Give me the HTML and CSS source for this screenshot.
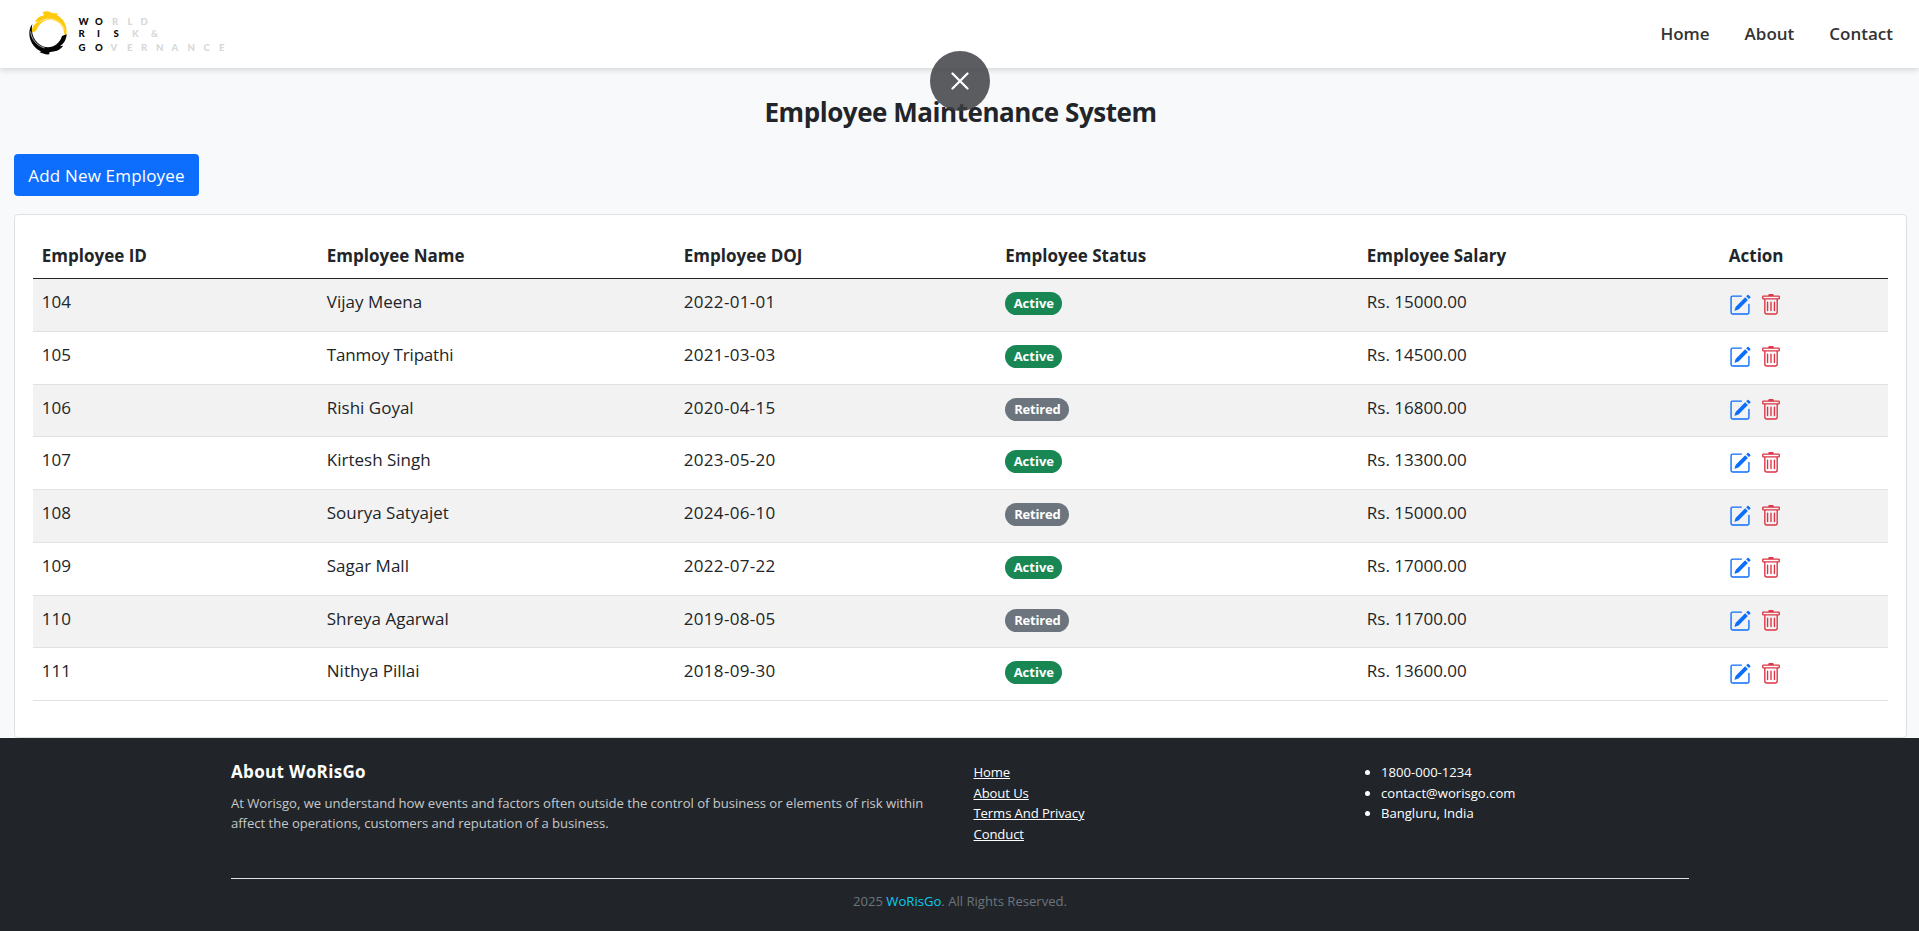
FILE: index.html
```html
<!DOCTYPE html>
<html lang="en">
<head>
<meta charset="utf-8">
<title>Employee Maintenance System</title>
<link rel="stylesheet" href="styles.css">
</head>
<body>
<svg width="0" height="0" class="sprite" aria-hidden="true">
  <symbol id="pencil" viewBox="0 0 16 16">
    <path d="M15.502 1.94a.5.5 0 0 1 0 .706L14.459 3.69l-2-2L13.502.646a.5.5 0 0 1 .707 0l1.293 1.293zm-1.75 2.456-2-2L4.939 9.21a.5.5 0 0 0-.121.196l-.805 2.414a.25.25 0 0 0 .316.316l2.414-.805a.5.5 0 0 0 .196-.12l6.813-6.814z"/>
    <path fill-rule="evenodd" d="M1 13.5A1.5 1.5 0 0 0 2.5 15h11a1.5 1.5 0 0 0 1.5-1.5v-6a.5.5 0 0 0-1 0v6a.5.5 0 0 1-.5.5h-11a.5.5 0 0 1-.5-.5v-11a.5.5 0 0 1 .5-.5H9a.5.5 0 0 0 0-1H2.500A1.5 1.5 0 0 0 1 2.500z"/>
  </symbol>
  <symbol id="trash" viewBox="0 0 16 16">
    <path d="M5.500 5.500A.5.5 0 0 1 6 6v6a.5.5 0 0 1-1 0V6a.5.5 0 0 1 .5-.5m2.500 0a.5.5 0 0 1 .5.5v6a.5.5 0 0 1-1 0V6a.5.5 0 0 1 .5-.5m3 .5a.5.5 0 0 0-1 0v6a.5.5 0 0 0 1 0z"/>
    <path d="M14.500 3a1 1 0 0 1-1 1H13v9a2 2 0 0 1-2 2H5a2 2 0 0 1-2-2V4h-.5a1 1 0 0 1-1-1V2a1 1 0 0 1 1-1H6a1 1 0 0 1 1-1h2a1 1 0 0 1 1 1h3.500a1 1 0 0 1 1 1zM4.118 4 4 4.059V13a1 1 0 0 0 1 1h6a1 1 0 0 0 1-1V4.059L11.882 4zM2.500 3h11V2h-11z"/>
  </symbol>
</svg>

<header class="navbar">
  <svg class="logo" width="210" height="48" viewBox="24 9 210 48">
    <g transform="translate(24 6) scale(.3333)">
      <path fill="#fecb0c" d="M22 80C23 64 32 53 44 46L32 48C39 36 48 30 60 28L56 18C68 14 76 17 82 20L104 23L98 27C122 39 131 63 127 86C126 94 124 99 122 103L122 92C122 66 108 46 84 42C64 38 46 50 36 75Z"/>
      <path fill="none" stroke="#fff" stroke-width="2" d="M46 48C70 31 108 38 121 70"/>
      <path fill="#050505" d="M128 85C127 103 118 114 108 121L118 119C111 128 102 134 92 136L76 139L76 145C66 147 52 140 46 138L52 137C28 126 16 104 16 82C16 70 19 61 25 54C19 82 31 109 56 121C82 130 106 116 114 90Z"/>
      <path fill="none" stroke="#fff" stroke-width="2" d="M20 76C22 100 38 119 62 126"/>
    </g>
    <g class="logo-text">
      <text y="25" x="78.500 95">WO</text><text class="pale" y="25" x="112 127.500 140.500">RLD</text>
      <text y="37.300" x="78.500 97 113.500">RIS</text><text class="pale" y="37.300" x="132 151">K&amp;</text>
      <text y="51" x="78.500 95">GO</text><text class="pale" y="51" x="110.500 127 141 156 171.500 187.500 203.500 219">VERNANCE</text>
    </g>
  </svg>
  <nav class="nav-links"><a>Home</a><a>About</a><a>Contact</a></nav>
</header>

<div class="close-bubble"><svg width="18" height="18" viewBox="0 0 18 18"><path d="M1.500 1.500l15 15M16.500 1.500l-15 15" stroke="#fff" stroke-width="2.200" stroke-linecap="round"/></svg></div>

<main class="page">
  <h1 class="title">Employee Maintenance System</h1>
  <button class="add-btn">Add New Employee</button>
  <section class="card">
    <table class="employees">
      <colgroup><col class="c-id"><col class="c-name"><col class="c-doj"><col class="c-status"><col class="c-salary"><col></colgroup>
      <thead><tr><th>Employee ID</th><th>Employee Name</th><th>Employee DOJ</th><th>Employee Status</th><th>Employee Salary</th><th>Action</th></tr></thead>
      <tbody>
        <tr><td>104</td><td>Vijay Meena</td><td class="num">2022-01-01</td><td><span class="badge active">Active</span></td><td>Rs. 15000.00</td><td><div class="actions"><svg class="edit"><use href="#pencil"/></svg><svg class="del"><use href="#trash"/></svg></div></td></tr>
        <tr><td>105</td><td class="tight">Tanmoy Tripathi</td><td class="num">2021-03-03</td><td><span class="badge active">Active</span></td><td>Rs. 14500.00</td><td><div class="actions"><svg class="edit"><use href="#pencil"/></svg><svg class="del"><use href="#trash"/></svg></div></td></tr>
        <tr><td>106</td><td>Rishi Goyal</td><td class="num">2020-04-15</td><td><span class="badge retired">Retired</span></td><td>Rs. 16800.00</td><td><div class="actions"><svg class="edit"><use href="#pencil"/></svg><svg class="del"><use href="#trash"/></svg></div></td></tr>
        <tr><td>107</td><td>Kirtesh Singh</td><td class="num">2023-05-20</td><td><span class="badge active">Active</span></td><td>Rs. 13300.00</td><td><div class="actions"><svg class="edit"><use href="#pencil"/></svg><svg class="del"><use href="#trash"/></svg></div></td></tr>
        <tr><td>108</td><td>Sourya Satyajet</td><td class="num">2024-06-10</td><td><span class="badge retired">Retired</span></td><td>Rs. 15000.00</td><td><div class="actions"><svg class="edit"><use href="#pencil"/></svg><svg class="del"><use href="#trash"/></svg></div></td></tr>
        <tr><td>109</td><td>Sagar Mall</td><td class="num">2022-07-22</td><td><span class="badge active">Active</span></td><td>Rs. 17000.00</td><td><div class="actions"><svg class="edit"><use href="#pencil"/></svg><svg class="del"><use href="#trash"/></svg></div></td></tr>
        <tr><td>110</td><td>Shreya Agarwal</td><td class="num">2019-08-05</td><td><span class="badge retired">Retired</span></td><td>Rs. 11700.00</td><td><div class="actions"><svg class="edit"><use href="#pencil"/></svg><svg class="del"><use href="#trash"/></svg></div></td></tr>
        <tr><td>111</td><td>Nithya Pillai</td><td class="num">2018-09-30</td><td><span class="badge active">Active</span></td><td>Rs. 13600.00</td><td><div class="actions"><svg class="edit"><use href="#pencil"/></svg><svg class="del"><use href="#trash"/></svg></div></td></tr>
      </tbody>
    </table>
  </section>
</main>

<footer class="footer">
  <div class="footer-inner">
    <div class="footer-cols">
      <div class="about">
        <h2>About WoRisGo</h2>
        <p>At Worisgo, we understand how events and factors often outside the control of business or elements of risk within<br>affect the operations, customers and reputation of a business.</p>
      </div>
      <div class="links"><a>Home</a><a>About Us</a><a>Terms And Privacy</a><a>Conduct</a></div>
      <ul class="contact"><li>1800-000-1234</li><li>contact@worisgo.com</li><li>Bangluru, India</li></ul>
    </div>
    <div class="copyright">2025 <a>WoRisGo</a>. All Rights Reserved.</div>
  </div>
</footer>
</body>
</html>
```
FILE: styles.css
```css
* { box-sizing: border-box; }
body {
  margin: 0;
  height: 931px;
  overflow: hidden;
  display: flex;
  flex-direction: column;
  background: #f8f9fa;
  color: #212529;
  font: 17px/26.4px "Open Sans", sans-serif;
}
.sprite { position: absolute; }

.navbar {
  height: 68px;
  flex: none;
  display: flex;
  justify-content: space-between;
  align-items: flex-start;
  padding: 9px 26px 0 24px;
  background: #fff;
  box-shadow: 0 2px 6px rgba(0, 0, 0, .15);
}
.logo-text { font: 900 9.6px Lato, sans-serif; fill: #080808; }
.logo-text .pale { fill: #d6d8d9; }
.nav-links {
  display: flex;
  gap: 35px;
  padding-top: 12px;
  font-weight: 600;
  color: #333;
}

.close-bubble {
  position: absolute;
  left: 930px;
  top: 51px;
  width: 60px;
  height: 60px;
  border-radius: 50%;
  background: rgba(60, 62, 66, .84);
  display: flex;
  align-items: center;
  justify-content: center;
  z-index: 2;
}

.page { padding: 0 12px 0 14px; }
.title {
  margin: 27px 0 0;
  height: 59px;
  text-align: center;
  font-size: 26px;
  line-height: 35px;
  font-weight: 700;
  letter-spacing: -.456px;
}
.add-btn {
  display: block;
  width: 185px;
  height: 42px;
  padding: 0;
  border: 0;
  border-radius: 4px;
  background: #0d6efd;
  color: #fff;
  font: 17px/43px "Open Sans", sans-serif;
  letter-spacing: .18px;
}
.card {
  margin-top: 18px;
  height: 524px;
  padding: 18px 18px 0 18px;
  background: #fff;
  border: 1px solid #dfe0e1;
  border-radius: 4px;
}
.employees {
  width: 100%;
  table-layout: fixed;
  border-collapse: separate;
  border-spacing: 0;
}
.c-id { width: 285px; }
.c-name { width: 357px; }
.c-doj { width: 321.500px; }
.c-status { width: 361.500px; }
.c-salary { width: 362px; }
th {
  height: 46px;
  padding: 10px 8.800px 0;
  text-align: left;
  vertical-align: top;
  border-bottom: 1px solid #212529;
}
td {
  height: 52.750px;
  padding: 10px 8.800px 0;
  vertical-align: top;
  border-bottom: 1px solid #dee2e6;
}
tbody tr:nth-child(odd) td { background: #f2f2f2; }
.tight { letter-spacing: -.19px; }
.num { letter-spacing: .3px; }
.badge {
  display: block;
  width: 57px;
  height: 23px;
  margin-top: 3px;
  border-radius: 12px;
  font-size: 13px;
  line-height: 23px;
  font-weight: 700;
  text-align: center;
  color: #fff;
}
.active { background: #198754; }
.retired { width: 64px; background: #6c757d; letter-spacing: -.2px; }
.actions { display: flex; gap: 9px; padding-top: 4.600px; }
.actions svg { width: 22px; height: 22px; fill: currentColor; }
.edit { color: #0d6efd; }
.del { color: #dc3545; }

.footer {
  flex: 1;
  background: #212529;
  color: #fff;
  font-size: 13.100px;
  line-height: 20.600px;
}
.footer-inner { width: 1458px; margin-left: 231px; }
.footer-cols {
  display: flex;
  height: 141px;
  padding-top: 24px;
  border-bottom: 1px solid #dee2e6;
}
.about { width: 742.500px; }
.about h2 { margin: -1px 0 9.500px; font-size: 17px; line-height: 22px; letter-spacing: .33px; }
.about p { margin: 0; color: rgba(255, 255, 255, .75); white-space: nowrap; letter-spacing: -.03px; }
.links { width: 376.500px; display: flex; flex-direction: column; align-items: flex-start; letter-spacing: -.1px; }
.links a { text-decoration: underline; }
.contact { margin: 0; padding-left: 31px; }
.copyright { padding-top: 12px; text-align: center; color: #6c757d; }
.copyright a { color: #0dcaf0; }
```
